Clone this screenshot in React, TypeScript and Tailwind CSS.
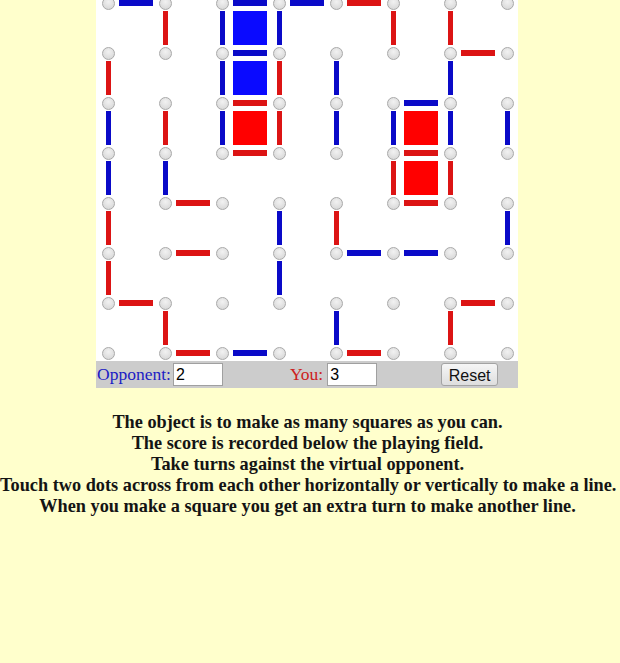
import React from "react";

type C = "b" | "r";

// dot grid: 8 x 8, spacing 57 across, 50 down
const COLS = 8;
const ROWS = 8;
const dx = (c: number) => 12 + 57 * c;
const dy = (r: number) => 3 + 50 * r;

// [row, col, colour] — line from (row,col) to (row,col+1)
const hLines: [number, number, C][] = [
  [0, 0, "b"], [0, 2, "b"], [0, 3, "b"], [0, 4, "r"],
  [1, 2, "b"], [1, 6, "r"],
  [2, 2, "r"], [2, 5, "b"],
  [3, 2, "r"], [3, 5, "r"],
  [4, 1, "r"], [4, 5, "r"],
  [5, 1, "r"], [5, 4, "b"], [5, 5, "b"],
  [6, 0, "r"], [6, 6, "r"],
  [7, 1, "r"], [7, 2, "b"], [7, 4, "r"],
];

// [row, col, colour] — line from (row,col) to (row+1,col)
const vLines: [number, number, C][] = [
  [0, 1, "r"], [0, 2, "b"], [0, 3, "b"], [0, 5, "r"], [0, 6, "r"],
  [1, 0, "r"], [1, 2, "b"], [1, 3, "r"], [1, 4, "b"], [1, 6, "b"],
  [2, 0, "b"], [2, 1, "r"], [2, 2, "b"], [2, 3, "r"], [2, 4, "b"], [2, 5, "b"], [2, 6, "b"], [2, 7, "b"],
  [3, 0, "b"], [3, 1, "b"], [3, 5, "r"], [3, 6, "r"],
  [4, 0, "r"], [4, 3, "b"], [4, 4, "r"], [4, 7, "b"],
  [5, 0, "r"], [5, 3, "b"],
  [6, 1, "r"], [6, 4, "b"], [6, 6, "r"],
];

const boxes: [number, number, C][] = [
  [0, 2, "b"], [1, 2, "b"], [2, 2, "r"], [2, 5, "r"], [3, 5, "r"],
];

const lineColor = (c: C) => (c === "b" ? "bg-[#0a0ac8]" : "bg-[#dc1414]");
const boxColor = (c: C) => (c === "b" ? "bg-[#0a0aff]" : "bg-[#ff0000]");

function Board() {
  const dots = [];
  for (let r = 0; r < ROWS; r++) {
    for (let c = 0; c < COLS; c++) {
      dots.push(
        <div
          key={`d${r}-${c}`}
          className="absolute w-[13px] h-[13px] rounded-full border border-[#a9a9a9] bg-[radial-gradient(circle_at_50%_35%,#f2f2f2,#d2d2d2)]"
          style={{ left: dx(c) - 6.5, top: dy(r) - 6.5 }}
        />
      );
    }
  }

  return (
    <div className="relative w-[422px] h-[361px] bg-white overflow-hidden">
      {boxes.map(([r, c, col]) => (
        <div
          key={`s${r}-${c}`}
          className={`absolute w-[34px] h-[34px] ${boxColor(col)}`}
          style={{ left: dx(c) + 11, top: dy(r) + 8 }}
        />
      ))}
      {hLines.map(([r, c, col]) => (
        <div
          key={`h${r}-${c}`}
          className={`absolute w-[34px] h-[6px] ${lineColor(col)}`}
          style={{ left: dx(c) + 11, top: dy(r) - 3 }}
        />
      ))}
      {vLines.map(([r, c, col]) => (
        <div
          key={`v${r}-${c}`}
          className={`absolute w-[5px] h-[34px] ${lineColor(col)}`}
          style={{ left: dx(c) - 2.5, top: dy(r) + 8 }}
        />
      ))}
      {dots}
    </div>
  );
}

function ScoreBar() {
  return (
    <div className="flex items-center w-[422px] h-[27px] bg-[#cccccc] pl-px font-['Liberation_Serif',serif] text-[17.5px]">
      <span className="text-[#1c1cc4]">Opponent:</span>
      <input
        readOnly
        value="2"
        className="ml-[2px] w-[50px] h-[23px] bg-white border border-[#a0a0a0] px-[2px] font-['Liberation_Sans',Arial,sans-serif] text-[16px] text-black outline-none"
      />
      <span className="ml-[67px] text-[#cc2020]">You:</span>
      <input
        readOnly
        value="3"
        className="ml-[4px] w-[50px] h-[23px] bg-white border border-[#a0a0a0] px-[2px] font-['Liberation_Sans',Arial,sans-serif] text-[16px] text-black outline-none"
      />
      <button className="ml-[64px] w-[57px] h-[23px] rounded-[3px] border border-[#a3a3a3] bg-linear-to-b from-[#f6f6f6] to-[#dedede] font-['Liberation_Sans',Arial,sans-serif] text-[16px] text-[#111]">
        Reset
      </button>
    </div>
  );
}

export default function App() {
  return (
    <div className="min-h-[663px] w-[620px] bg-[#ffffcc]">
      <div className="w-[615px]">
        <div className="ml-[96px]">
          <Board />
          <ScoreBar />
        </div>
        <div className="pt-[24px] text-center font-['Liberation_Serif',serif] font-bold text-[18.3px] leading-[21px] text-[#141414] whitespace-nowrap">
          <p>The object is to make as many squares as you can.</p>
          <p>The score is recorded below the playing field.</p>
          <p>Take turns against the virtual opponent.</p>
          <p>Touch two dots across from each other horizontally or vertically to make a line.</p>
          <p>When you make a square you get an extra turn to make another line.</p>
        </div>
      </div>
    </div>
  );
}
